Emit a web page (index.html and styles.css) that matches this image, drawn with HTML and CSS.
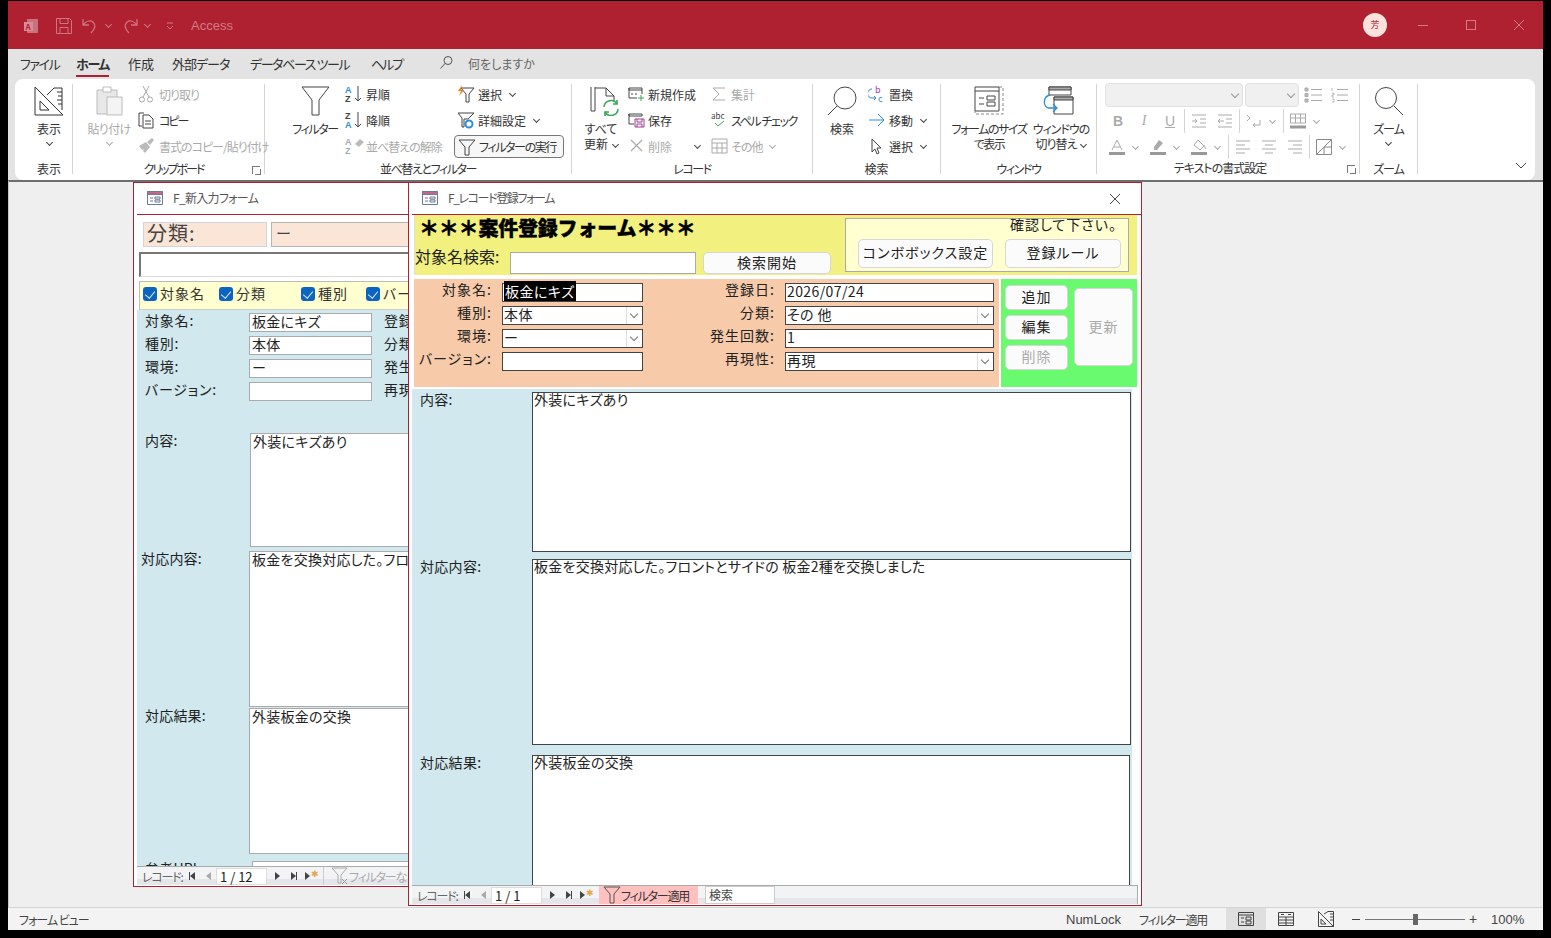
FILE: index.html
```html
<!DOCTYPE html>
<html lang="ja">
<head>
  <meta charset="UTF-8" />
  <title>Access</title>
  <link rel="stylesheet" href="styles.css">
</head>
<body>
<div class="window">

  <!-- Title bar -->
  <div class="titlebar">
    <svg class="qa qa-app" width="18" height="18" viewBox="0 0 18 18"><rect x="5" y="2" width="11" height="14" rx="1" fill="#c9727e"/><rect x="2" y="5" width="9" height="9" fill="#d98c96"/><text x="3.500" y="12.500" font-size="8" font-weight="700" fill="#af2131">A</text></svg>
    <svg class="qa qa-save" width="18" height="18" viewBox="0 0 18 18" fill="none" stroke="#cf7480"><path d="M1.500 1.500h13l2 2v13h-15zM5 1.500v5h8v-5M5 16.500v-6h8v6"/></svg>
    <svg class="qa qa-undo" width="18" height="18" viewBox="0 0 18 18" fill="none" stroke="#cf7480" stroke-width="1.300"><path d="M2 2v6h6M2 8c3-4 7-5 10-3 3 3 2 7-2 11"/></svg>
    <span class="qa-chev qa-chev1"></span>
    <svg class="qa qa-redo" width="18" height="18" viewBox="0 0 18 18" fill="none" stroke="#cf7480" stroke-width="1.300"><path d="M16 2v6h-6M16 8c-3-4-7-5-10-3-3 3-2 7 2 11"/></svg>
    <span class="qa-chev qa-chev2"></span>
    <svg class="qa qa-more" width="10" height="10" viewBox="0 0 10 10" fill="none" stroke="#cf7480"><path d="M2 2h6M2 5l3 3 3-3"/></svg>
    <span class="app-name">Access</span>
    <span class="avatar">芳</span>
    <div class="winbtns">
      <svg width="12" height="12" viewBox="0 0 12 12" stroke="#d27a86"><path d="M1 6.500h10"/></svg>
      <svg width="12" height="12" viewBox="0 0 12 12" stroke="#d27a86" fill="none"><rect x="1.500" y="1.500" width="9" height="9"/></svg>
      <svg width="12" height="12" viewBox="0 0 12 12" stroke="#d27a86"><path d="M1 1l10 10M11 1L1 11"/></svg>
    </div>
  </div>

  <!-- Tabs -->
  <div class="tabs">
    <span class="tab t1 ls15">ファイル</span>
    <span class="tab t2 active ls15">ホーム</span>
    <span class="tab t3">作成</span>
    <span class="tab t4 ls1">外部データ</span>
    <span class="tab t5 ls15">データベース ツール</span>
    <span class="tab t6 ls2">ヘルプ</span>
    <svg class="tell-icon" width="15" height="15" viewBox="0 0 15 15" fill="none" stroke="#555"><circle cx="9" cy="5.500" r="4"/><path d="M6 8.500L1.500 13.500"/></svg>
    <span class="tell">何をしますか</span>
  </div>

  <!-- Ribbon -->
  <div class="ribbon">
    <div class="group g-view">
      <div class="group-body center">
        <div class="big">
          <svg width="30" height="30" viewBox="0 0 30 30" fill="none" stroke="#333"><path d="M1 1l28 28H1z" fill="#fff"/><path d="M6 15l9 9H6z"/><path d="M13 9L20 2h8v22"/><path d="M23 6h5M24 10h4M23 14h5M24 18h4"/></svg>
          <span>表示</span><i class="chev"></i>
        </div>
      </div>
      <div class="group-label">表示</div>
    </div>

    <div class="group g-clip">
      <div class="group-body">
        <div class="big off w-paste">
          <svg width="30" height="30" viewBox="0 0 30 30" fill="#e8e8e8" stroke="#bbb"><path d="M3 4h20v24H3z"/><path d="M9 1h8v5H9z" fill="#fff"/><path d="M13 11h15v18H13z" fill="#f4f4f4"/></svg>
          <span class="ls05">貼り付け</span><i class="chev"></i>
        </div>
        <div class="col c-clip">
          <div class="small off ls1"><svg width="16" height="18" viewBox="0 0 16 18" fill="none" stroke="#aaa"><path d="M5 1l6 11M11 1L5 12"/><circle cx="4" cy="14.500" r="2.500"/><circle cx="12" cy="14.500" r="2.500"/></svg>切り取り</div>
          <div class="small ls2"><svg width="16" height="18" viewBox="0 0 16 18" fill="none" stroke="#444"><path d="M4 15H1V2h5"/><path d="M5 4h6l4 4v9H5z" fill="#fff"/><path d="M7 10h6M7 13h6"/></svg>コピー</div>
          <div class="small off ls1"><svg width="16" height="18" viewBox="0 0 16 18" fill="#bbb"><path d="M9 5l5-4 2 2-4 5zM1 9l7-4 4 5-5 6-2-2 1-2-2 1z"/></svg>書式のコピー/貼り付け</div>
        </div>
      </div>
      <div class="group-label l-clip ls2">クリップボード<i class="launcher"></i></div>
    </div>

    <div class="group g-sort">
      <div class="group-body">
        <div class="big w-filter">
          <svg width="30" height="30" viewBox="0 0 30 30" fill="none" stroke="#444"><path d="M2 1h27L19 14v15h-7V14z"/></svg>
          <span class="ls15">フィルター</span>
        </div>
        <div class="col c-sort">
          <div class="small"><svg width="20" height="18" viewBox="0 0 20 18"><text class="az" x="0" y="8" fill="#2a8fd8">A</text><text class="az" x="0" y="17" fill="#444">Z</text><path d="M13 1v15M10 13l3 3 3-3" fill="none" stroke="#444"/></svg>昇順</div>
          <div class="small"><svg width="20" height="18" viewBox="0 0 20 18"><text class="az" x="0" y="8" fill="#444">Z</text><text class="az" x="0" y="17" fill="#2a8fd8">A</text><path d="M13 1v15M10 13l3 3 3-3" fill="none" stroke="#444"/></svg>降順</div>
          <div class="small off ls1"><svg width="20" height="18" viewBox="0 0 20 18"><text class="az" x="0" y="8" fill="#aaa">A</text><text class="az" x="0" y="17" fill="#aaa">Z</text><path d="M10 7l5-5 4 3-5 5z" fill="#bbb"/></svg>並べ替えの解除</div>
        </div>
        <div class="col c-filter">
          <div class="small"><svg width="18" height="18" viewBox="0 0 18 18" fill="none" stroke="#444"><path d="M4 3h13l-5 6v8H9V9z" fill="#fff"/><path d="M5 0L1 6h3L2 11l5-6H4z" fill="#e8821e" stroke="none"/></svg>選択<i class="chev"></i></div>
          <div class="small"><svg width="18" height="18" viewBox="0 0 18 18" fill="none" stroke="#444"><path d="M1 2h16l-6 6H7v8H5V7z"/><circle cx="12" cy="13" r="3.500" stroke="#2a8fd8" stroke-width="2"/></svg>詳細設定<i class="chev"></i></div>
          <div class="small pressed ls15"><svg width="18" height="18" viewBox="0 0 18 18" fill="none" stroke="#444"><path d="M1 2h16l-6 7v8H7V9z"/></svg>フィルターの実行</div>
        </div>
      </div>
      <div class="group-label l-sort ls15">並べ替えとフィルター</div>
    </div>

    <div class="group g-rec">
      <div class="group-body">
        <div class="big w-refresh">
          <svg width="30" height="30" viewBox="0 0 30 30" fill="none" stroke="#444"><path d="M1 1v24h4"/><path d="M5 1v1h11l8 8v6M5 2v23"/><path d="M16 2v8h8"/><g stroke="#3aa655" stroke-width="1.600"><path d="M14 21a7 7 0 0 1 13-3M28 23a7 7 0 0 1-13 3"/><path d="M27 14v4h-4M15 30v-4h4"/></g></svg>
          <span>すべて<br>更新<i class="chev"></i></span>
        </div>
        <div class="col c-rec1">
          <div class="small"><svg width="17" height="18" viewBox="0 0 17 18" fill="none" stroke="#444"><path d="M1 3h13v2H1zM1 3v10h8M14 5v4M3 9h2M7 9h2"/><path d="M13 10v6M10 13h6" stroke="#3aa655"/></svg>新規作成</div>
          <div class="small"><svg width="17" height="18" viewBox="0 0 17 18" fill="none" stroke="#444"><path d="M1 3h13v2H1zM1 3v10h5"/><path d="M7 8h9v8H7zM9 8v3h5V8M9 16v-3h5v3" stroke="#a33a9a"/></svg>保存</div>
          <div class="small off"><svg width="17" height="18" viewBox="0 0 17 18" fill="none" stroke="#aaa" stroke-width="1.200"><path d="M3 3l11 11M14 3L3 14"/></svg>削除<i class="chev dark del-chev"></i></div>
        </div>
        <div class="col c-rec2">
          <div class="small off"><svg width="17" height="18" viewBox="0 0 17 18" fill="none" stroke="#aaa"><path d="M14 3H2l6 6-6 6h12"/></svg>集計</div>
          <div class="small ls15"><svg width="17" height="18" viewBox="0 0 17 18"><text x="0" y="8" font-size="8" fill="#444">abc</text><path d="M4 12l3 3 6-5" fill="none" stroke="#3aa655"/></svg>スペル チェック</div>
          <div class="small off ls1"><svg width="17" height="18" viewBox="0 0 17 18" fill="none" stroke="#aaa"><path d="M1 2h15v14H1zM1 6h15M1 11h15M6 6v10M11 6v10"/></svg>その他<i class="chev lite"></i></div>
        </div>
      </div>
      <div class="group-label ls15">レコード</div>
    </div>

    <div class="group g-find">
      <div class="group-body">
        <div class="big w-find">
          <svg width="30" height="30" viewBox="0 0 30 30" fill="none" stroke="#444"><circle cx="18" cy="12" r="11"/><path d="M10 20L1 29"/></svg>
          <span>検索</span>
        </div>
        <div class="col c-find">
          <div class="small"><svg width="18" height="18" viewBox="0 0 18 18" fill="none"><text x="7" y="8" font-size="9" fill="#a33ab0">b</text><text x="10" y="17" font-size="9" fill="#2a8fd8">c</text><path d="M4 4a4 4 0 0 0 0 9h4M6 11l2 2-2 2" stroke="#2a8fd8"/></svg>置換</div>
          <div class="small"><svg width="18" height="18" viewBox="0 0 18 18" fill="none" stroke="#2a8fd8"><path d="M1 9h15M10 3l6 6-6 6"/></svg>移動<i class="chev"></i></div>
          <div class="small"><svg width="18" height="18" viewBox="0 0 18 18" fill="#fff" stroke="#444"><path d="M4 2v13l3-3 2 5 2-1-2-5h4z"/></svg>選択<i class="chev"></i></div>
        </div>
      </div>
      <div class="group-label">検索</div>
    </div>

    <div class="group g-win">
      <div class="group-body">
        <div class="big w-fit">
          <svg width="30" height="30" viewBox="0 0 30 30" fill="none" stroke="#444"><path d="M1 1h24v24H1z"/><path d="M1 5h24M5 12h5M5 18h5M13 10h8v4h-8zM13 16h8v4h-8z"/><path d="M25 1h4v27H1v-3" stroke-dasharray="3 2" stroke="#888"/></svg>
          <span class="ls15">フォームのサイズ<br>で表示</span>
        </div>
        <div class="big w-switch">
          <svg width="32" height="30" viewBox="0 0 32 30" fill="none" stroke="#444"><path d="M7 1h22v8H7z"/><path d="M7 1h22v3H7z" fill="#aaa"/><path d="M12 11h19v17H12z" fill="#fff"/><path d="M12 11h19v3H12z" fill="#aaa"/><path d="M8 9a7 7 0 0 0-2 13h8M11 18l4 4-4 4" stroke="#2a8fd8" stroke-width="1.300"/></svg>
          <span class="ls1">ウィンドウの<br>切り替え<i class="chev"></i></span>
        </div>
      </div>
      <div class="group-label ls15">ウィンドウ</div>
    </div>

    <div class="group g-text">
      <div class="text-rows">
        <div class="trow r1">
          <div class="sel s-font"></div>
          <div class="sel s-size"></div>
          <svg class="ti" width="18" height="16" viewBox="0 0 18 16" stroke="#aaa"><path d="M7 2.500h11M7 8h11M7 13.500h11"/><path d="M1 1h3v3H1zM1 6.500h3v3H1zM1 12h3v3H1z" fill="#bbb"/></svg>
          <svg class="ti ti2" width="18" height="16" viewBox="0 0 18 16" stroke="#aaa"><path d="M7 2.500h11M7 8h11M7 13.500h11"/><path d="M2 1v3M2 6h2v2H2v2h2M2 12h2v3H2" fill="none" stroke-width=".8"/></svg>
        </div>
        <div class="trow r2">
          <span class="tb b">B</span><span class="tb i">I</span><span class="tb u">U</span>
          <span class="vsep"></span>
          <svg class="ti" width="16" height="14" viewBox="0 0 16 14" stroke="#aaa" fill="none"><path d="M1 1h14M9 5h6M9 9h6M1 13h14M1 7h5M4 5l2 2-2 2"/></svg>
          <svg class="ti ti3" width="16" height="14" viewBox="0 0 16 14" stroke="#aaa" fill="none"><path d="M1 1h14M9 5h6M9 9h6M1 13h14M1 7h6M3 5L1 7l2 2"/></svg>
          <span class="vsep"></span>
          <svg class="ti" width="16" height="15" viewBox="0 0 16 15" stroke="#aaa" fill="none"><path d="M1 1l3 3-3 3M14 6v5H7M9 9l-2 2 2 2"/></svg>
          <i class="chev lite"></i>
          <span class="vsep"></span>
          <svg class="ti" width="16" height="16" viewBox="0 0 16 16" stroke="#aaa" fill="none"><path d="M0.500 1h15v9H.500zM.500 5h15M5.500 1v9M10.500 1v9"/><path d="M0 14h16" stroke-width="3" stroke="#999"/></svg>
          <i class="chev lite"></i>
        </div>
        <div class="trow r3">
          <svg class="ti ti-first" width="16" height="16" viewBox="0 0 16 16" fill="none" stroke="#aaa"><path d="M3 11L8 1l5 10M5 8h6"/><path d="M0 14.500h16" stroke-width="3" stroke="#999"/></svg><i class="chev lite"></i>
          <svg class="ti ti4" width="16" height="16" viewBox="0 0 16 16" fill="#aaa"><path d="M9 1l4 3-6 7H4V8z"/><path d="M0 13h16v3H0z" fill="#999"/></svg><i class="chev lite"></i>
          <svg class="ti ti4" width="16" height="16" viewBox="0 0 16 16" fill="none" stroke="#aaa"><path d="M7 1l6 6-4 4-6-5zM13 6l2 4"/><path d="M0 14.500h16" stroke-width="3" stroke="#999"/></svg><i class="chev lite"></i>
          <span class="vsep"></span>
          <svg class="ti" width="16" height="14" viewBox="0 0 16 14" stroke="#aaa"><path d="M1 1h14M1 5h9M1 9h14M1 13h9"/></svg>
          <svg class="ti ti3" width="16" height="14" viewBox="0 0 16 14" stroke="#aaa"><path d="M1 1h14M4 5h8M1 9h14M4 13h8"/></svg>
          <svg class="ti ti3" width="16" height="14" viewBox="0 0 16 14" stroke="#aaa"><path d="M1 1h14M6 5h9M1 9h14M6 13h9"/></svg>
          <span class="vsep"></span>
          <svg class="ti" width="16" height="16" viewBox="0 0 16 16" fill="none" stroke="#888"><path d="M.500.500h15v15H.500zM.500 15.500l15-15M8 8v7.500M8 8h7.500"/></svg>
          <i class="chev lite"></i>
        </div>
      </div>
      <div class="group-label l-text ls1">テキストの書式設定<i class="launcher"></i></div>
    </div>

    <div class="group g-zoom">
      <div class="group-body center">
        <div class="big">
          <svg width="30" height="30" viewBox="0 0 30 30" fill="none" stroke="#444"><circle cx="12" cy="12" r="10.500"/><path d="M20 20l9 9"/></svg>
          <span class="ls1">ズーム</span><i class="chev"></i>
        </div>
      </div>
      <div class="group-label ls1">ズーム</div>
    </div>
    <svg class="collapse" width="12" height="8" viewBox="0 0 12 8" fill="none" stroke="#444"><path d="M1 1l5 5 5-5"/></svg>
  </div>

  <!-- MDI workspace -->
  <div class="workspace">

    <!-- back form -->
    <div class="mdi form-a">
      <div class="mdi-title">
        <svg width="16" height="16" viewBox="0 0 16 16" fill="#fff" stroke="#6a7a9a"><path d="M.500 1.500h15v13H.500z"/><path d="M.500 1.500h15v3H.500z" fill="#c06a88"/><path d="M3 8h3M3 11h3M8 7h5v2H8zM8 10h5v2H8z"/></svg>
        <span class="ls05">F_新入力フォーム</span>
      </div>
      <div class="a-top">
        <div class="a-cap">分類:</div>
        <div class="a-cap a-cap2">ー</div>
      </div>
      <div class="a-search"></div>
      <div class="a-checks">
        <label class="chk c1"><i></i>対象名</label>
        <label class="chk c2"><i></i>分類</label>
        <label class="chk c3"><i></i>種別</label>
        <label class="chk c4"><i></i>バージョン</label>
      </div>
      <div class="a-body">
        <div class="a-grid">
          <span>対象名:</span><div class="a-field">板金にキズ</div><span class="a-l2">登録日:</span>
          <span>種別:</span><div class="a-field">本体</div><span class="a-l2">分類:</span>
          <span>環境:</span><div class="a-field">ー</div><span class="a-l2">発生回数:</span>
          <span>バージョン:</span><div class="a-field"></div><span class="a-l2">再現性:</span>
        </div>
        <div class="a-memo m1"><span>内容:</span><div class="a-box">外装にキズあり</div></div>
        <div class="a-memo m2"><span>対応内容:</span><div class="a-box">板金を交換対応した。フロントとサイドの 板金2種を交換しました</div></div>
        <div class="a-memo m3"><span>対応結果:</span><div class="a-box">外装板金の交換</div></div>
        <div class="a-memo m4"><span>参考URL:</span><div class="a-box"></div></div>
      </div>
      <div class="nav nav-a">
        <span class="nav-cap">レコード:</span>
        <span class="nb nb-first"></span><span class="nb nb-prev off"></span>
        <span class="nav-cur">1 / 12</span>
        <span class="nb nb-next"></span><span class="nb nb-last"></span><span class="nb nb-new"><b>✱</b></span>
        <span class="nav-filter none"><svg width="18" height="18" viewBox="0 0 18 18" fill="none" stroke="#aaa"><path d="M1 1h15l-6 7v8H7V8z"/><path d="M11 12l5 5M16 12l-5 5" stroke="#999"/></svg>フィルターなし</span>
      </div>
    </div>

    <!-- front form -->
    <div class="mdi form-b">
      <div class="mdi-title">
        <svg width="16" height="16" viewBox="0 0 16 16" fill="#fff" stroke="#6a7a9a"><path d="M.500 1.500h15v13H.500z"/><path d="M.500 1.500h15v3H.500z" fill="#c06a88"/><path d="M3 8h3M3 11h3M8 7h5v2H8zM8 10h5v2H8z"/></svg>
        <span class="ls15">F_レコード登録フォーム</span>
        <svg class="mdi-close" width="12" height="12" viewBox="0 0 12 12" stroke="#444"><path d="M1 1l10 10M11 1L1 11"/></svg>
      </div>
      <div class="b-head">
        <div class="b-head-l">
          <div class="b-heading">＊＊＊案件登録フォーム＊＊＊</div>
          <div class="b-search">
            <span>対象名検索:</span>
            <div class="b-search-in"></div>
            <div class="btn b-find">検索開始</div>
          </div>
        </div>
        <div class="b-note">
          <div class="b-note-t">確認して下さい。</div>
          <div class="b-note-btns">
            <div class="btn nb1">コンボボックス設定</div>
            <div class="btn nb2">登録ルール</div>
          </div>
        </div>
      </div>
      <div class="b-mid">
        <div class="b-fields">
          <span class="lab">対象名:</span><div class="fld"><em>板金にキズ</em></div>
          <span class="lab">登録日:</span><div class="fld">2026/07/24</div>
          <span class="lab">種別:</span><div class="fld combo">本体</div>
          <span class="lab">分類:</span><div class="fld combo">その 他</div>
          <span class="lab">環境:</span><div class="fld combo">ー</div>
          <span class="lab">発生回数:</span><div class="fld">1</div>
          <span class="lab">バージョン:</span><div class="fld"></div>
          <span class="lab">再現性:</span><div class="fld combo">再現</div>
        </div>
        <div class="b-actions">
          <div class="b-act-col">
            <div class="btn">追加</div>
            <div class="btn">編集</div>
            <div class="btn dis">削除</div>
          </div>
          <div class="btn dis b-update">更新</div>
        </div>
      </div>
      <div class="b-body">
        <span class="b-lab">内容:</span><div class="memo">外装にキズあり</div>
        <span class="b-lab">対応内容:</span><div class="memo">板金を交換対応した。フロントとサイドの 板金2種を交換しました</div>
        <span class="b-lab">対応結果:</span><div class="memo">外装板金の交換</div>
      </div>
      <div class="nav nav-b">
        <span class="nav-cap">レコード:</span>
        <span class="nb nb-first"></span><span class="nb nb-prev off"></span>
        <span class="nav-cur">1 / 1</span>
        <span class="nb nb-next"></span><span class="nb nb-last"></span><span class="nb nb-new"><b>✱</b></span>
        <span class="nav-filter on"><svg width="18" height="18" viewBox="0 0 18 18" fill="none" stroke="#555"><path d="M1 1h16l-6 7v9H7V8z"/></svg>フィルター適用</span>
        <span class="nav-search">検索</span>
      </div>
    </div>
  </div>

  <!-- Status bar -->
  <div class="statusbar">
    <span class="st-left">フォーム ビュー</span>
    <span class="st-num">NumLock</span>
    <span class="st-filter">フィルター適用</span>
    <span class="st-view on"><svg width="16" height="14" viewBox="0 0 16 14" fill="none" stroke="#444"><path d="M.500.500h15v13H.500zM.500 3h15M3 6h3M3 10h3M8 5h5v3H8zM8 9h5v3H8z"/></svg></span>
    <span class="st-view"><svg width="16" height="14" viewBox="0 0 16 14" fill="none" stroke="#444"><path d="M.500.500h15v13H.500zM.500 5h15M.500 8h15M.500 11h15M8 5v8"/><path d="M3 2.500h3M10 2.500h3"/></svg></span>
    <span class="st-view"><svg width="16" height="16" viewBox="0 0 16 16" fill="none" stroke="#444"><path d="M.500.500l15 15H.500z"/><path d="M3 8l5 5H3z"/><path d="M6 3l4-2.500h5.500v15M12 3h3M12 6h3M12 9h3"/></svg></span>
    <span class="st-minus"></span>
    <span class="st-slider"><i></i></span>
    <span class="st-plus">+</span>
    <span class="st-zoom">100%</span>
  </div>
</div>
</body>
</html>
```

FILE: styles.css
```css
* { margin:0; padding:0; box-sizing:border-box; }
html, body { height:100%; overflow:hidden; }
body { background:#000; font-family:"Noto Sans CJK JP","Noto Sans",sans-serif; font-size:12px; color:#333; font-feature-settings:"palt"; }
i, em { font-style:normal; }
svg { letter-spacing:0; }
.az { font:700 9px "Liberation Sans",sans-serif; }

/* kana in the original font is narrower than Noto */
.ls05 { letter-spacing:-.7px; }
.ls1 { letter-spacing:-1px; }
.ls15 { letter-spacing:-1.400px; }
.ls2 { letter-spacing:-2px; }

.window { position:relative; margin:1px 0 0 8px; width:1535px; height:929px; background:#e3e3e3; overflow:hidden; }

/* Title bar */
.titlebar { position:relative; height:48px; background:#af2131; }
.qa { position:absolute; top:16px; }
.qa-app { left:14px; }
.qa-save { left:47px; }
.qa-undo { left:73px; }
.qa-redo { left:113px; }
.qa-more { left:157px; top:20px; }
.qa-chev { position:absolute; top:21px; width:5px; height:5px; border-right:1px solid #cf7480; border-bottom:1px solid #cf7480; transform:rotate(45deg); }
.qa-chev1 { left:98px; }
.qa-chev2 { left:137px; }
.app-name { position:absolute; left:183px; top:17px; font:13px "Liberation Sans",sans-serif; color:#d27a86; }
.avatar { position:absolute; left:1355px; top:12px; width:24px; height:24px; border-radius:50%; background:#fbe3dc; color:#a5303d; font-size:9px; line-height:24px; text-align:center; }
.winbtns { position:absolute; right:18px; top:18px; display:flex; gap:36px; }

/* Tabs */
.tabs { position:relative; height:30px; background:#e3e3e3; font-size:13px; color:#333; }
.tab { position:absolute; top:5px; line-height:20px; white-space:nowrap; }
.t1 { left:12px; } .t2 { left:68px; } .t3 { left:120px; } .t4 { left:164px; } .t5 { left:242px; } .t6 { left:363px; }
.tab.active { font-weight:700; }
.tab.active::after { content:""; position:absolute; left:0; right:0; top:21px; height:2px; background:#af2131; }
.tell-icon { position:absolute; left:431px; top:6px; }
.tell { position:absolute; left:460px; top:5px; font-size:12px; line-height:20px; color:#666; }

/* Ribbon */
.ribbon { position:relative; display:flex; margin-left:7px; width:1520px; height:101px; padding-top:5px; background:#fff; border-radius:8px; }
.group { position:relative; height:90px; border-right:1px solid #d4d4d4; }
.g-view { width:58px; padding-left:11px; } .g-clip { width:192px; } .g-sort { width:307px; } .g-rec { width:241px; }
.g-find { width:128px; } .g-win { width:156px; } .g-text { width:263px; } .g-zoom { width:58px; }
.group-body { display:flex; height:78px; margin-top:-2px; }
.group-body.center { justify-content:center; }
.group-label { position:relative; height:18px; line-height:18px; text-align:center; color:#333; white-space:nowrap; }
.l-clip { padding-left:10px; }
.l-sort { padding-left:20px; }
.l-text { padding-right:16px; }
.launcher { position:absolute; right:4px; top:6px; width:8px; height:8px; border:1px solid #777; border-width:1px 0 0 1px; }
.launcher::after { content:""; position:absolute; left:2px; top:2px; width:5px; height:5px; border-right:1px solid #777; border-bottom:1px solid #777; }

.big { display:flex; flex-direction:column; align-items:center; padding-top:4px; line-height:15px; text-align:center; white-space:nowrap; }
.big svg { margin-bottom:5px; flex:none; }
.big.off { color:#aaa; }
.chev { display:inline-block; width:5px; height:5px; margin:0 0 2px 5px; border-right:1px solid #444; border-bottom:1px solid #444; transform:rotate(45deg); }
.big > .chev { margin:4px 0 0; }
.chev.lite { border-color:#aaa; }
.off .chev { border-color:#aaa; }

.col { display:flex; flex-direction:column; margin-top:-1px; }
.small { display:flex; align-items:center; gap:3px; flex:none; height:26px; white-space:nowrap; }
.small svg { flex:none; }
.small .chev { margin:-2px 0 0 5px; }
.small.off { color:#aaa; }
.small.off .del-chev { margin-left:20px; border-color:#444; }
.pressed { width:110px; height:23px; margin:2px 0 0 -3px; padding:0 0 0 3px; border:1px solid #777; border-radius:4px; background:#f7f7f7; }

.w-paste { width:42px; margin:0 8px 0 15px; }
.c-clip .small { gap:5px; }
.w-filter { width:44px; margin:0 8px 0 28px; padding-top:4px; }
.c-sort { width:112px; }
.c-sort .small { gap:1px; }
.w-refresh { width:36px; margin:0 9px 0 11px; }
.w-refresh svg { margin-left:8px; }
.c-rec1 { width:83px; }
.w-find { width:32px; margin:0 10px 0 13px; }
.w-fit { width:76px; margin:0 7px 0 10px; }
.w-switch { width:54px; }
.w-switch svg { margin-right:6px; }

/* text format group */
.text-rows { display:flex; flex-direction:column; height:78px; margin-top:-3px; padding-left:8px; color:#aaa; }
.trow { display:flex; align-items:center; flex:none; height:26px; }
.r1 { margin-top:1px; }
.sel { height:24px; background:#f0f0f0; border:1px solid #e0e0e0; border-radius:4px; position:relative; }
.sel::after { content:""; position:absolute; right:4px; top:7px; width:5px; height:5px; border-right:1px solid #999; border-bottom:1px solid #999; transform:rotate(45deg); }
.s-font { width:138px; margin-right:2px; }
.s-size { width:54px; margin-right:5px; }
.ti { flex:none; }
.ti-first { margin-left:4px; }
.ti2 { margin-left:8px; }
.ti3 { margin-left:10px; }
.ti4 { margin-left:10px; }
.trow .chev { flex:none; margin:-2px 2px 0 8px; }
.tb { width:26px; text-align:center; font:700 14px "Liberation Sans",sans-serif; color:#aaa; }
.tb.i { font-style:italic; font-weight:400; font-family:"Liberation Serif",serif; }
.tb.u { margin-right:-5px; text-decoration:underline; font-weight:400; }
.vsep { width:1px; height:24px; margin:0 6px; background:#d4d4d4; }
.collapse { position:absolute; left:1500px; top:83px; }

/* Workspace */
.workspace { position:absolute; left:0; top:179px; width:1535px; height:728px; background:#efefef; border-top:2px solid #6e6e6e; border-left:1px solid #c8c8c8; border-bottom:1px solid #d4d4d4; }
.mdi { position:absolute; top:0; background:#fff; border:1px solid #af2131; overflow:hidden; }
.mdi-title { position:relative; display:flex; align-items:center; gap:10px; height:32px; margin-left:3px; padding:0 0 2px 10px; border-bottom:1px solid #af2131; color:#555; }
.mdi-title svg { flex:none; }
.mdi-close { position:absolute; right:20px; top:10px; }

/* Back form */
.form-a { left:124px; top:0; width:500px; height:705px; }
.a-top { display:flex; gap:4px; margin:7px 0 0 9px; }
.a-cap { width:124px; height:25px; padding-left:3px; background:#fbe5d6; border:1px solid #ccd5e0; font-size:20px; line-height:20px; color:#444; letter-spacing:1px; }
.a-cap2 { width:300px; border-color:#b5b5b5; font-size:15px; padding-left:4px; }
.a-search { width:400px; height:25px; margin:5px 0 0 5px; border:2px solid #777; border-right:0; border-bottom:1px solid #ddd; }
.a-checks { display:flex; align-items:center; height:29px; margin:4px 0 0 5px; padding:0 0 5px 3px; background:#ffffcf; border:1px solid #bbb; border-bottom:1px solid #ccc; font-size:14px; color:#333; letter-spacing:1px; }
.chk { display:flex; align-items:center; gap:3px; flex:none; }
.chk i { display:block; width:14px; height:14px; margin-top:2px; border-radius:3px; background:#0a64c0; position:relative; }
.chk i::after { content:""; position:absolute; left:4px; top:2px; width:5px; height:8px; border-right:1.500px solid #cfe3f7; border-bottom:1.500px solid #cfe3f7; transform:rotate(40deg); }
.c1 { width:76px; } .c2 { width:82px; } .c3 { width:65px; }
.a-body { height:556px; margin:0 0 0 3px; background:#d0e8ee; overflow:hidden; font-size:14px; color:#222; }
.a-grid { display:grid; grid-template-columns:112px 123px 100px; grid-auto-rows:19px; row-gap:4px; padding-top:3px; }
.a-grid span { padding-left:8px; line-height:14px; letter-spacing:.8px; white-space:nowrap; }
.a-grid .a-l2 { padding-left:12px; }
.a-field, .a-box { background:#fff; border:1px solid #aaa; line-height:15px; padding-left:2px; white-space:nowrap; letter-spacing:.25px; }
.a-memo { display:flex; letter-spacing:.2px; }
.a-memo span { flex:none; width:112px; padding:0 0 0 8px; line-height:15px; }
.a-box { width:300px; height:100%; }
.m1 { height:114px; margin-top:32px; }
.m1 .a-box { margin-left:1px; }
.m2 { height:156px; margin-top:4px; } .m2 span { padding-left:4px; }
.m3 { height:146px; margin-top:1px; }
.m4 { height:40px; margin-top:7px; } .m4 .a-box { margin-left:3px; }

/* Front form */
.form-b { left:399px; top:0; width:734px; height:724px; }
.b-head { display:flex; width:723px; height:60px; margin-left:5px; background:#f2f180; border-left:1px solid #ddd; }
.b-head-l { width:430px; padding-left:1px; }
.b-heading { font-size:20px; font-weight:900; line-height:24px; margin:1px 0 0 3px; color:#000; letter-spacing:-.2px; -webkit-text-stroke:.4px #000; font-feature-settings:normal; white-space:nowrap; }
.b-search { display:flex; align-items:center; margin-top:9px; font-size:16px; color:#222; }
.b-search span { flex:none; width:95px; margin-left:-1px; padding-bottom:14px; line-height:14px; white-space:nowrap; }
.b-search-in { width:186px; height:22px; background:#fff; border:1px solid #aaa; }
.btn { display:flex; align-items:center; justify-content:center; padding-bottom:3px; background:#fbfbfb; border:1px solid #d6d6d6; border-radius:5px; font-size:14px; color:#222; letter-spacing:1px; white-space:nowrap; }
.btn.dis { color:#aaa; }
.b-find { width:128px; height:22px; margin-left:7px; }
.b-note { position:relative; width:284px; height:54px; margin-top:3px; background:#ffffd0; border:1px solid #aaa; }
.b-note-t { position:absolute; right:11px; top:-2px; font-size:14px; line-height:14px; color:#222; letter-spacing:1px; }
.b-note-btns { position:absolute; left:12px; top:20px; display:flex; gap:12px; }
.nb1 { width:135px; height:29px; } .nb2 { width:116px; height:29px; }
.b-mid { display:flex; gap:2px; width:723px; height:108px; margin:4px 0 0 5px; }
.b-fields { display:grid; grid-template-columns:78px 141px 122px 209px; column-gap:10px; grid-auto-rows:19px; row-gap:4px; width:585px; padding-top:4px; background:#f7caa9; font-size:14px; color:#222; }
.lab { text-align:right; line-height:13px; letter-spacing:1px; white-space:nowrap; }
.fld { position:relative; background:#fff; border:1px solid #444; line-height:15px; padding-left:1px; letter-spacing:.4px; }
.fld em { background:#000; color:#fff; padding:0 1px; }
.combo::after { content:""; position:absolute; right:0; top:0; width:15px; height:17px; background:#fff; border-left:1px solid #ddd; }
.combo::before { content:""; position:absolute; z-index:1; right:5px; top:4px; width:5px; height:5px; border-right:1px solid #777; border-bottom:1px solid #777; transform:rotate(45deg); }
.b-actions { display:flex; width:136px; background:#6afa6f; padding:6px 0 0 4px; gap:6px; }
.b-act-col { display:flex; flex-direction:column; gap:5px; width:63px; }
.b-act-col .btn { height:25px; }
.b-update { width:59px; height:78px; margin-top:3px; }
.b-body { display:grid; grid-template-columns:120px 599px; grid-template-rows:160px 186px 140px; row-gap:7px; width:720px; height:496px; margin:2px 0 0 3px; padding-top:3px; background:#d0e8ee; overflow:hidden; font-size:14px; color:#222; }
.b-lab { padding:0 0 0 8px; line-height:14px; letter-spacing:.3px; }
.b-lab:nth-of-type(3) { padding-top:3px; }
.memo { background:#fff; border:1px solid #444; padding-left:1px; line-height:13px; letter-spacing:.25px; white-space:nowrap; }
.memo:nth-of-type(3) { margin:3px 1px 0 0; padding-top:0; }

/* Navigation bars */
.nav { display:flex; align-items:center; height:19px; background:linear-gradient(#f2f3f5 12px,#e5e6e9 12px); border-top:1px solid #aaa; white-space:nowrap; color:#666; }
.nav-a { width:500px; margin-left:3px; }
.nav-b { width:726px; margin-left:3px; border-right:1px solid #aaa; }
.nav-cap { flex:none; width:48px; padding-left:5px; letter-spacing:-1.200px; }
.nb { position:relative; display:block; width:16px; height:16px; flex:none; }
.nb::before { content:""; position:absolute; left:5px; top:4px; border:4px solid transparent; border-left-width:0; border-right:5px solid #444; }
.nb-next::before, .nb-last::before, .nb-new::before { border-right-width:0; border-left:5px solid #444; border-right-color:transparent; }
.nb-first::after, .nb-last::after { content:""; position:absolute; left:4px; top:4px; width:1px; height:8px; background:#444; }
.nb-last::after { left:10px; }
.nb.off::before { border-right-color:#aaa; }
.nb-new b { position:absolute; left:9px; top:-1px; font-size:9px; color:#e8a64a; font-weight:400; }
.nb-new::before { left:3px; }
.nav-cur { flex:none; width:51px; height:17px; margin:0 3px 0 -1px; padding-left:3px; background:#fff; border:1px solid #ddd; font-size:13px; line-height:16px; color:#222; }
.nav-filter { display:flex; align-items:center; flex:none; height:18px; margin-left:6px; letter-spacing:-1.200px; }
.nav-filter svg { flex:none; }
.nav-filter.none { margin-left:5px; padding-left:7px; color:#aaa; border-left:1px solid #ccc; }
.nav-filter.on { width:99px; padding-left:4px; background:#ffc0c0; color:#333; }
.nav-search { flex:none; width:70px; height:18px; margin-left:7px; padding-left:3px; background:#fff; border:1px solid #ccc; color:#444; line-height:16px; }

/* Status bar */
.statusbar { position:absolute; left:0; top:907px; display:flex; align-items:center; width:1535px; height:22px; background:#f3f3f3; color:#444; white-space:nowrap; }
.st-left { flex:none; width:1058px; padding-left:11px; letter-spacing:-1px; }
.st-num { flex:none; width:73px; font:13px "Liberation Sans",sans-serif; }
.st-filter { flex:none; width:87px; letter-spacing:-1.200px; }
.st-view { display:flex; align-items:center; justify-content:center; flex:none; width:40px; height:22px; }
.st-view.on { background:#dfdfdf; }
.st-minus { flex:none; width:8px; height:1px; margin:0 5px 0 6px; background:#444; }
.st-slider { position:relative; flex:none; width:100px; height:1px; background:#777; }
.st-slider i { position:absolute; left:48px; top:-5px; width:5px; height:11px; background:#666; }
.st-plus { flex:none; width:16px; text-align:center; font:14px "Liberation Sans",sans-serif; }
.st-zoom { flex:none; margin-left:10px; font:13px "Liberation Sans",sans-serif; }
```
